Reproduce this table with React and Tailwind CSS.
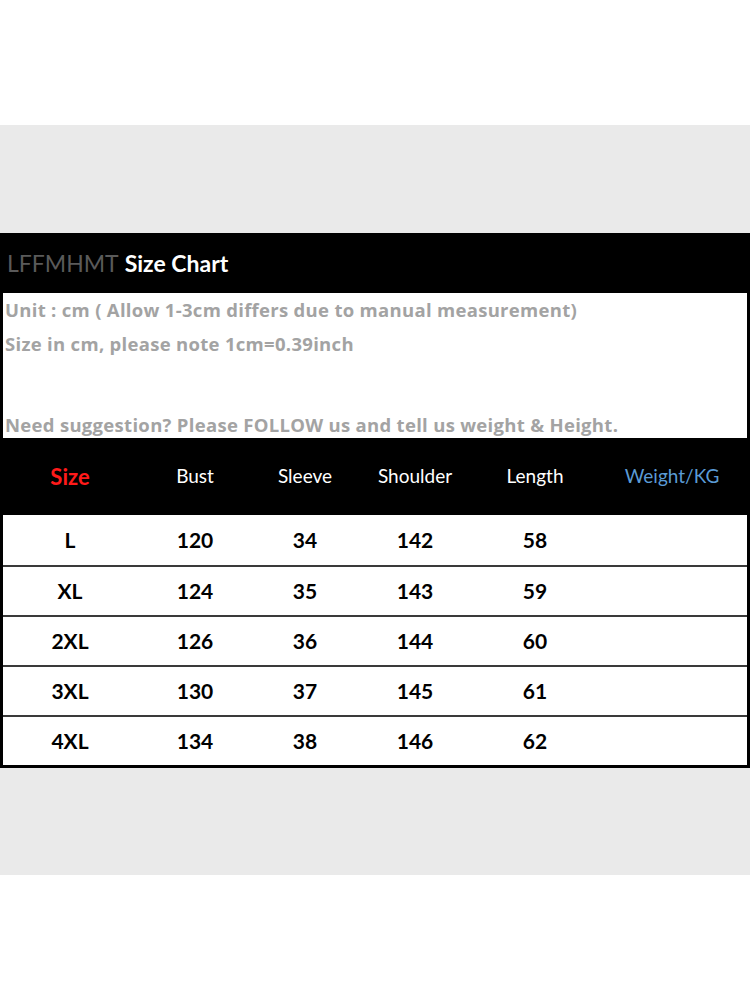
import React from "react";

// Size chart picture: gray band with black-framed table

const rows = [
  ["L", "120", "34", "142", "58"],
  ["XL", "124", "35", "143", "59"],
  ["2XL", "126", "36", "144", "60"],
  ["3XL", "130", "37", "145", "61"],
  ["4XL", "134", "38", "146", "62"],
];

const cols = "grid grid-cols-[134px_116px_104px_116px_124px_150px]";

const App = () => {
  return (
    <div className="w-[750px] h-[1000px] bg-white flex flex-col" style={{ fontFamily: "Lato, 'Open Sans', sans-serif" }}>
      <div className="h-[125px]" />
      <div className="h-[750px] bg-[#eaeaea] flex flex-col">
        <div className="h-[108px]" />

        <div className="bg-black px-[3px] pb-[3px]">
          {/* title */}
          <div className="h-[60px] flex items-center pl-[4px] text-[23px] leading-none">
            <span className="text-[#5a5a5a]">LFFMHMT</span>
            <span className="text-white font-bold ml-[6px]">Size Chart</span>
          </div>

          {/* notes */}
          <div className="bg-white h-[145px] flex flex-col pl-[2px] text-[#a3a3a3] font-bold text-[18.5px] tracking-[0.3px] leading-none font-['Open_Sans',sans-serif]">
            <div className="mt-[8px]">Unit : cm ( Allow 1-3cm differs due to manual measurement)</div>
            <div className="mt-[15px]">Size in cm, please note 1cm=0.39inch</div>
            <div className="mt-[63px]">Need suggestion? Please FOLLOW us and tell us weight &amp; Height.</div>
          </div>

          {/* header */}
          <div className={`${cols} h-[77px] items-center text-[19px] text-white`}>
            <div className="text-center font-bold text-[#ff1a1a] text-[22px]">Size</div>
            <div className="text-center">Bust</div>
            <div className="text-center">Sleeve</div>
            <div className="text-center">Shoulder</div>
            <div className="text-center">Length</div>
            <div className="text-center text-[#5b9bd5]">Weight/KG</div>
          </div>

          {/* body */}
          <div className="bg-white">
            {rows.map((r, i) => (
              <div
                key={r[0]}
                className={`${cols} h-[50px] items-center font-bold text-[21px] text-black ${i > 0 ? "border-t-2 border-[#3a3a3a]" : ""}`}
              >
                {r.map((v, j) => (
                  <div key={j} className="text-center">{v}</div>
                ))}
                <div />
              </div>
            ))}
          </div>
        </div>
      </div>
    </div>
  );
};

export default App;
